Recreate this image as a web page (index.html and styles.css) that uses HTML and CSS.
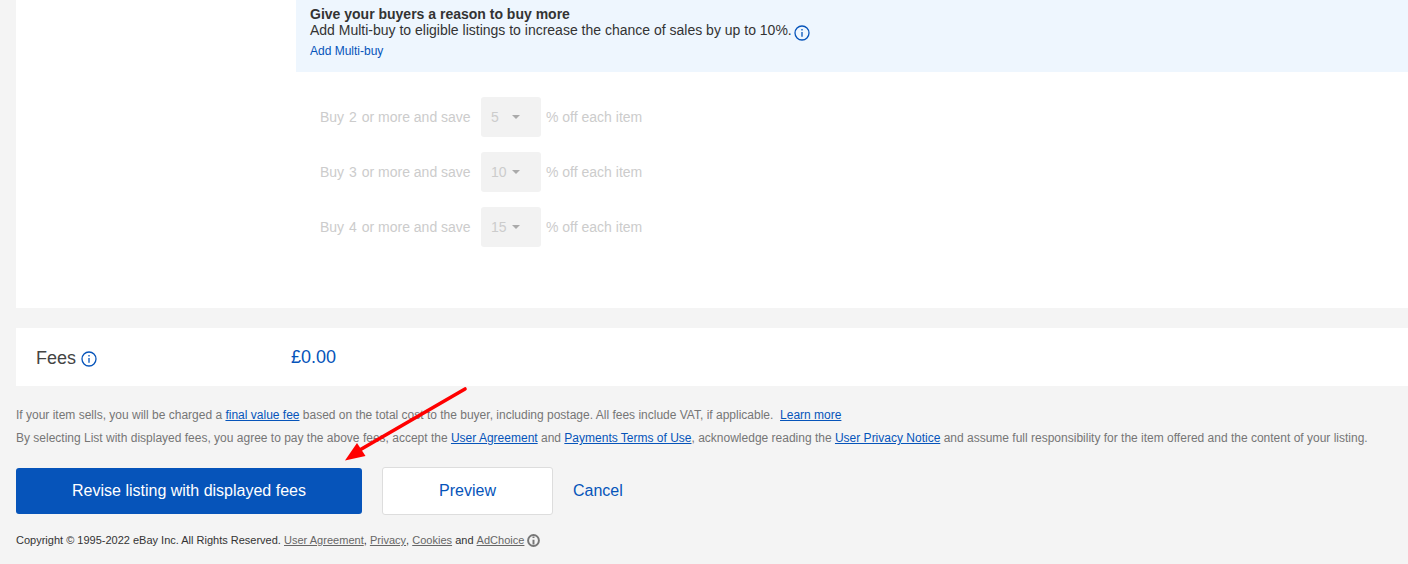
FILE: index.html
```html
<!DOCTYPE html>
<html lang="en">
<head>
  <meta charset="UTF-8" />
  <title>Revise listing</title>
  <link rel="stylesheet" href="styles.css">
</head>
<body>

  <!-- Multi-buy card -->
  <section class="card multi-buy">
    <div class="promo">
      <div class="promo-title">Give your buyers a reason to buy more</div>
      <div class="promo-text">Add Multi-buy to eligible listings to increase the chance of sales by up to 10%.
        <svg class="info promo-info" viewBox="0 0 16 16"><circle cx="8" cy="8" r="7"/><path d="M8 7v4.8M8 4v1.6"/></svg>
      </div>
      <a class="promo-link" href="#">Add Multi-buy</a>
    </div>

    <div class="tiers">
      <div class="tier">
        <span class="tier-label">Buy <b>2</b> or more and save</span>
        <span class="tier-select"><span class="tier-value">5</span><i class="caret"></i></span>
        <span>% off each item</span>
      </div>
      <div class="tier">
        <span class="tier-label">Buy <b>3</b> or more and save</span>
        <span class="tier-select"><span class="tier-value">10</span><i class="caret"></i></span>
        <span>% off each item</span>
      </div>
      <div class="tier">
        <span class="tier-label">Buy <b>4</b> or more and save</span>
        <span class="tier-select"><span class="tier-value">15</span><i class="caret"></i></span>
        <span>% off each item</span>
      </div>
    </div>
  </section>

  <!-- Fees -->
  <section class="card fees">
    <div class="fees-label">Fees
      <svg class="info fees-info" viewBox="0 0 16 16"><circle cx="8" cy="8" r="7"/><path d="M8 7v4.8M8 4v1.6"/></svg>
    </div>
    <div class="fees-value">£0.00</div>
  </section>

  <div class="notes">
    <p>If your item sells, you will be charged a <a href="#">final value fee</a> based on the total cost to the buyer, including postage. All fees include VAT, if applicable. &nbsp;<a href="#">Learn more</a></p>
    <p>By selecting List with displayed fees, you agree to pay the above fees, accept the <a href="#">User Agreement</a> and <a href="#">Payments Terms of Use</a>, acknowledge reading the <a href="#">User Privacy Notice</a> and assume full responsibility for the item offered and the content of your listing.</p>
  </div>

  <div class="actions">
    <button class="btn-primary">Revise listing with displayed fees</button>
    <button class="btn-secondary">Preview</button>
    <a class="cancel" href="#">Cancel</a>
  </div>

  <footer class="copyright">
    Copyright © 1995-2022 eBay Inc. All Rights Reserved. <a href="#">User Agreement</a>, <a href="#">Privacy</a>, <a href="#">Cookies</a> and <a href="#">AdChoice</a>
    <svg class="adchoice" viewBox="0 0 12 12"><circle cx="6" cy="6" r="5"/><path d="M6 5.2v4.4M6 2.2v1.6"/></svg>
  </footer>

  <!-- Red annotation arrow over the page -->
  <svg class="arrow" width="1408" height="564" viewBox="0 0 1408 564">
    <path class="arrow-shaft" d="M465 389L358 451"/>
    <path class="arrow-head" d="M345 460.5L357 443L365.5 456Z"/>
  </svg>

</body>
</html>
```

FILE: styles.css
```css
body {
  margin: 0;
  height: 564px;
  overflow: hidden;
  position: relative;
  background-color: #f4f4f4;
  font-family: "Liberation Sans", Arial, sans-serif;
  font-size: 14px;
  color: #333;
}

a {
  color: #0654ba;
}

.card {
  margin-left: 16px;
  background-color: white;
}

/* Multi-buy card */
.multi-buy {
  height: 308px;
  margin-bottom: 20px;
}

.promo {
  margin-left: 280px;
  height: 72px;
  box-sizing: border-box;
  padding: 6px 14px 0;
  background-color: #eef6fe;
}

.promo-title {
  font-weight: bold;
  line-height: 16px;
}

.promo-text {
  height: 16px;
  line-height: 16px;
}

.promo-link {
  display: block;
  margin-top: 6px;
  font-size: 12px;
  line-height: 14px;
  text-decoration: none;
}

.info {
  fill: none;
  stroke: #0654ba;
  stroke-width: 1.3;
}

.promo-info {
  width: 16px;
  height: 16px;
  margin-left: -2px;
  vertical-align: -6px;
}

.tiers {
  padding: 25px 0 0 304px;
  color: #ccc;
}

.tier {
  display: flex;
  align-items: center;
  height: 40px;
  margin-bottom: 15px;
}

.tier-label {
  width: 161px;
}

.tier-label b {
  font-weight: normal;
  margin: 0 1px;
}

.tier-select {
  display: flex;
  align-items: center;
  box-sizing: border-box;
  width: 60px;
  height: 40px;
  margin-right: 5px;
  padding-left: 10px;
  background-color: #f2f2f2;
  border-radius: 3px;
}

.tier-value {
  width: 21px;
}

.caret {
  width: 0;
  height: 0;
  border-left: 4px solid transparent;
  border-right: 4px solid transparent;
  border-top: 4px solid #aaa;
}

/* Fees */
.fees {
  display: flex;
  align-items: center;
  height: 58px;
  padding-left: 20px;
}

.fees-label {
  width: 255px;
  padding-top: 2px;
  font-size: 18px;
  color: #444;
}

.fees-info {
  width: 16px;
  height: 16px;
  margin-left: 0;
  vertical-align: -3px;
}

.fees-value {
  font-size: 18px;
  color: #0654ba;
}

/* Legal notes */
.notes {
  margin: 22px 0 0 16px;
  font-size: 12px;
  color: #767676;
}

.notes p {
  margin: 0 0 9px;
  line-height: 14px;
}

/* Buttons */
.actions {
  display: flex;
  align-items: center;
  margin: 22px 0 0 16px;
}

.btn-primary {
  width: 346px;
  height: 46px;
  margin-right: 20px;
  background-color: #0654ba;
  color: white;
  border: none;
  border-radius: 3px;
  font: 16px "Liberation Sans", Arial, sans-serif;
}

.btn-secondary {
  width: 171px;
  height: 48px;
  margin-right: 20px;
  background-color: white;
  color: #0654ba;
  border: 1px solid #ddd;
  border-radius: 3px;
  font: 16px "Liberation Sans", Arial, sans-serif;
}

.cancel {
  font-size: 16px;
  text-decoration: none;
}

/* Footer */
.copyright {
  margin: 18px 0 0 16px;
  font-size: 11px;
  line-height: 14px;
  color: #333;
}

.copyright a {
  color: #666;
  letter-spacing: 0.02px;
}

.adchoice {
  width: 13px;
  height: 13px;
  margin-left: 0;
  vertical-align: -3px;
  fill: none;
  stroke: #777;
  stroke-width: 1.8;
}

.arrow {
  position: absolute;
  left: 0;
  top: 0;
  pointer-events: none;
}

.arrow-shaft {
  fill: none;
  stroke: #f00;
  stroke-width: 3.6;
  stroke-linecap: round;
}

.arrow-head {
  fill: #f00;
}
```
